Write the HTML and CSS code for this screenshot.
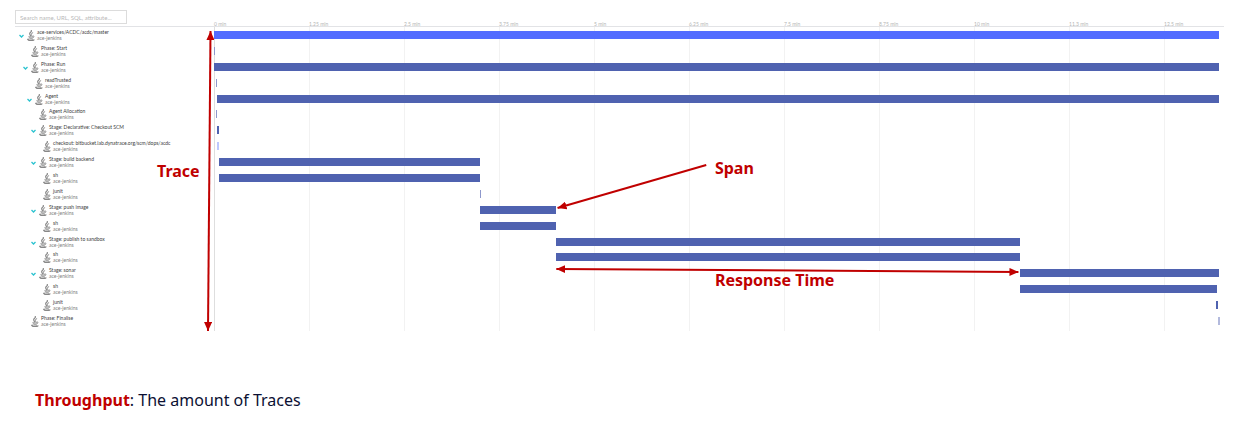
FILE: index.html
```html
<!DOCTYPE html>
<html lang="en">
<head>
<meta charset="utf-8">
<title>Pipeline trace</title>
<link rel="stylesheet" href="styles.css">
</head>
<body>
<svg class="defs" aria-hidden="true">
  <symbol id="java" viewBox="0 0 16 22">
    <g fill="none" stroke="currentColor" stroke-linecap="round">
      <path stroke-width="2.4" d="M8.600 1c1.500 3-4.800 4.300-3 7.500.6 1.200 1.600 1.800 1.400 3.500"/>
      <path stroke-width="2" d="M11.500 5.500c-3 1.500-3.800 2.600-2.400 4 .8.9.2 1.800-.6 2.500"/>
      <path stroke-width="2" d="M4 13c-4 1.500 4.500 1.700 7 .6M12 12c3-.6 2.600 2.600.2 3.400"/>
      <path stroke-width="2" d="M4.500 16c.5 1.200 4.500 1.200 6.500.2"/>
      <path stroke-width="2.400" d="M2.500 18.200c-4 2 4 2.600 9 1.300M3.500 20.800c4 .7 9 .3 10.500-1.200"/>
    </g>
  </symbol>
  <symbol id="chevron" viewBox="0 0 10 8">
    <path d="M1 2l4 4 4-4" fill="none" stroke="currentColor" stroke-width="2.600"/>
  </symbol>
</svg>
<main class="page">
  <section class="trace">
    <header class="head">
      <div class="tools"><input class="search" type="search" aria-label="Search spans" placeholder="Search name, URL, SQL, attribute..."></div>
      <div class="scale axis">
        <span>0 min</span><span>1.25 min</span><span>2.5 min</span><span>3.75 min</span><span>5 min</span><span>6.25 min</span><span>7.5 min</span><span>8.75 min</span><span>10 min</span><span>11.3 min</span><span>12.5 min</span>
      </div>
    </header>
    <div class="body">
      <div class="lines scale" aria-hidden="true"><i></i><i></i><i></i><i></i><i></i><i></i><i></i><i></i><i></i><i></i><i></i></div>
      <ul class="spans">
        <li class="row l0"><div class="name"><button class="toggle" aria-label="Collapse"><svg><use href="#chevron"/></svg></button><svg class="icon"><use href="#java"/></svg><p>ace-services/ACDC/acdc/master<small>ace-jenkins</small></p></div><div class="track"><div class="bar root" style="width:99.505%"></div></div></li>
        <li class="row l1"><div class="name"><svg class="icon"><use href="#java"/></svg><p>Phase: Start<small>ace-jenkins</small></p></div><div class="track"><div class="bar soft" style="width:.099%"></div></div></li>
        <li class="row l1"><div class="name"><button class="toggle" aria-label="Collapse"><svg><use href="#chevron"/></svg></button><svg class="icon"><use href="#java"/></svg><p>Phase: Run<small>ace-jenkins</small></p></div><div class="track"><div class="bar" style="width:99.505%"></div></div></li>
        <li class="row l2"><div class="name"><svg class="icon"><use href="#java"/></svg><p>readTrusted<small>ace-jenkins</small></p></div><div class="track"><div class="bar soft" style="margin-left:.198%;width:.099%"></div></div></li>
        <li class="row l2"><div class="name"><button class="toggle" aria-label="Collapse"><svg><use href="#chevron"/></svg></button><svg class="icon"><use href="#java"/></svg><p>Agent<small>ace-jenkins</small></p></div><div class="track"><div class="bar" style="margin-left:.248%;width:99.257%"></div></div></li>
        <li class="row l3"><div class="name"><svg class="icon"><use href="#java"/></svg><p>Agent Allocation<small>ace-jenkins</small></p></div><div class="track"><div class="bar soft" style="margin-left:.198%;width:.099%"></div></div></li>
        <li class="row l3"><div class="name"><button class="toggle" aria-label="Collapse"><svg><use href="#chevron"/></svg></button><svg class="icon"><use href="#java"/></svg><p>Stage: Declarative: Checkout SCM<small>ace-jenkins</small></p></div><div class="track"><div class="bar" style="margin-left:.297%;width:.198%"></div></div></li>
        <li class="row l4"><div class="name"><svg class="icon"><use href="#java"/></svg><p>checkout: bitbucket.lab.dynatrace.org/scm/dops/acdc<small>ace-jenkins</small></p></div><div class="track"><div class="bar pale" style="margin-left:.297%;width:.198%"></div></div></li>
        <li class="row l3"><div class="name"><button class="toggle" aria-label="Collapse"><svg><use href="#chevron"/></svg></button><svg class="icon"><use href="#java"/></svg><p>Stage: build backend<small>ace-jenkins</small></p></div><div class="track"><div class="bar" style="margin-left:.495%;width:25.891%"></div></div></li>
        <li class="row l4"><div class="name"><svg class="icon"><use href="#java"/></svg><p>sh<small>ace-jenkins</small></p></div><div class="track"><div class="bar" style="margin-left:.495%;width:25.842%"></div></div></li>
        <li class="row l4"><div class="name"><svg class="icon"><use href="#java"/></svg><p>junit<small>ace-jenkins</small></p></div><div class="track"><div class="bar soft" style="margin-left:26.337%;width:.099%"></div></div></li>
        <li class="row l3"><div class="name"><button class="toggle" aria-label="Collapse"><svg><use href="#chevron"/></svg></button><svg class="icon"><use href="#java"/></svg><p>Stage: push image<small>ace-jenkins</small></p></div><div class="track"><div class="bar" style="margin-left:26.337%;width:7.525%"></div></div></li>
        <li class="row l4"><div class="name"><svg class="icon"><use href="#java"/></svg><p>sh<small>ace-jenkins</small></p></div><div class="track"><div class="bar" style="margin-left:26.337%;width:7.525%"></div></div></li>
        <li class="row l3"><div class="name"><button class="toggle" aria-label="Collapse"><svg><use href="#chevron"/></svg></button><svg class="icon"><use href="#java"/></svg><p>Stage: publish to sandbox<small>ace-jenkins</small></p></div><div class="track"><div class="bar" style="margin-left:33.861%;width:45.941%"></div></div></li>
        <li class="row l4"><div class="name"><svg class="icon"><use href="#java"/></svg><p>sh<small>ace-jenkins</small></p></div><div class="track"><div class="bar" style="margin-left:33.861%;width:45.941%"></div></div></li>
        <li class="row l3"><div class="name"><button class="toggle" aria-label="Collapse"><svg><use href="#chevron"/></svg></button><svg class="icon"><use href="#java"/></svg><p>Stage: sonar<small>ace-jenkins</small></p></div><div class="track"><div class="bar" style="margin-left:79.802%;width:19.703%"></div></div></li>
        <li class="row l4"><div class="name"><svg class="icon"><use href="#java"/></svg><p>sh<small>ace-jenkins</small></p></div><div class="track"><div class="bar" style="margin-left:79.802%;width:19.505%"></div></div></li>
        <li class="row l4"><div class="name"><svg class="icon"><use href="#java"/></svg><p>junit<small>ace-jenkins</small></p></div><div class="track"><div class="bar" style="margin-left:99.257%;width:.198%"></div></div></li>
        <li class="row l1"><div class="name"><svg class="icon"><use href="#java"/></svg><p>Phase: Finalise<small>ace-jenkins</small></p></div><div class="track"><div class="bar faint" style="margin-left:99.406%;width:.198%"></div></div></li>
      </ul>
    </div>
    <svg class="arrows" aria-hidden="true">
      <defs>
        <marker id="tip" markerUnits="userSpaceOnUse" markerWidth="9" markerHeight="8" refX="9" refY="4" orient="auto-start-reverse"><path d="M0 0l9 4-9 4z" fill="#c00000"/></marker>
      </defs>
      <g stroke="#c00000" stroke-width="2">
        <line x1="210.500" y1="31" x2="208" y2="331" marker-start="url(#tip)" marker-end="url(#tip)"/>
        <line x1="57%" y1="165" x2="45%" y2="208" marker-end="url(#tip)"/>
        <line x1="44.900%" y1="269" x2="82.200%" y2="272" marker-start="url(#tip)" marker-end="url(#tip)"/>
      </g>
    </svg>
    <strong class="note note-trace">Trace</strong>
    <strong class="note note-span">Span</strong>
    <strong class="note note-time">Response Time</strong>
  </section>
  <p class="caption"><strong>Throughput</strong>: The amount of Traces</p>
</main>
</body>
</html>
```
FILE: styles.css
```css
* { box-sizing: border-box; }
body { margin: 0; background: #fff; font-family: "Noto Sans", "Open Sans", sans-serif; color: #0b1033; }
p, ul { margin: 0; padding: 0; list-style: none; }
.defs { position: absolute; width: 0; height: 0; }

.trace { position: relative; padding: 10px 15px 0; }
.head, .row { display: grid; grid-template-columns: 199px 1fr; }
.head { align-items: end; border-bottom: 1px solid #e2e3e6; }
.tools { display: flex; padding-bottom: 2px; }
.search { width: 112px; height: 14px; padding: 0 4px; border: 1px solid #dcdcdc; border-radius: 0; font: 6px/8px Lato, "Noto Sans", sans-serif; background: #fff; appearance: none; }
.search::placeholder { color: #b8b8b8; opacity: 1; }
.scale { display: grid; grid-template-columns: repeat(10, 95fr) 60fr; }
.axis { padding-bottom: 0; font: 5px/4px Lato, "Noto Sans", sans-serif; color: #b4b4b4; white-space: nowrap; }

.body { position: relative; height: 304px; padding-bottom: 2px; }
.lines { position: absolute; inset: 0 0 0 199px; }
.lines i { border-left: 1px solid #f2f2f2; }
.lines i:first-child { border-color: #dedede; }
.spans { position: relative; display: grid; grid-auto-rows: 1fr; height: 100%; }
.row { align-items: center; min-height: 0; }
.name { display: grid; grid-template-columns: 5px 7px 1fr; align-items: center; height: 12px; column-gap: 3px; padding-left: 4px; }
.l1 .name { padding-left: 8px; }
.l2 .name { padding-left: 12px; }
.l3 .name { padding-left: 16px; }
.l4 .name { padding-left: 20px; }
.toggle { display: flex; width: 5px; padding: 2px 0 0; border: 0; background: none; color: #2cc3d0; }
.toggle svg { width: 5px; height: 4px; }
.icon { grid-column: 2; grid-row: 1; width: 8px; height: 12px; padding-top: 1px; color: #888; }
.name p { grid-column: 3; font: 5px/6px Lato, "Noto Sans", sans-serif; white-space: nowrap; color: #404040; }
.name small { display: block; font-size: 5px; color: #808080; }
.track { height: 8px; }
.bar { height: 8px; background: #4f62b0; }
.bar.root { background: #526cff; }
.bar.soft { background: #8e98cc; }
.bar.pale { background: #bdc8ff; }
.bar.faint { background: #b3badd; }

.arrows { position: absolute; inset: 0; width: 100%; height: 100%; pointer-events: none; }
.note { position: absolute; font-size: 16px; line-height: 20px; color: #c00000; white-space: nowrap; }
.note-trace { left: 157px; top: 161px; }
.note-span { left: 57.700%; top: 158px; }
.note-time { left: 57.700%; top: 270px; }

.caption { padding: 59px 35px 0; font-size: 16px; line-height: 20px; }
.caption strong { color: #c00000; }
```
